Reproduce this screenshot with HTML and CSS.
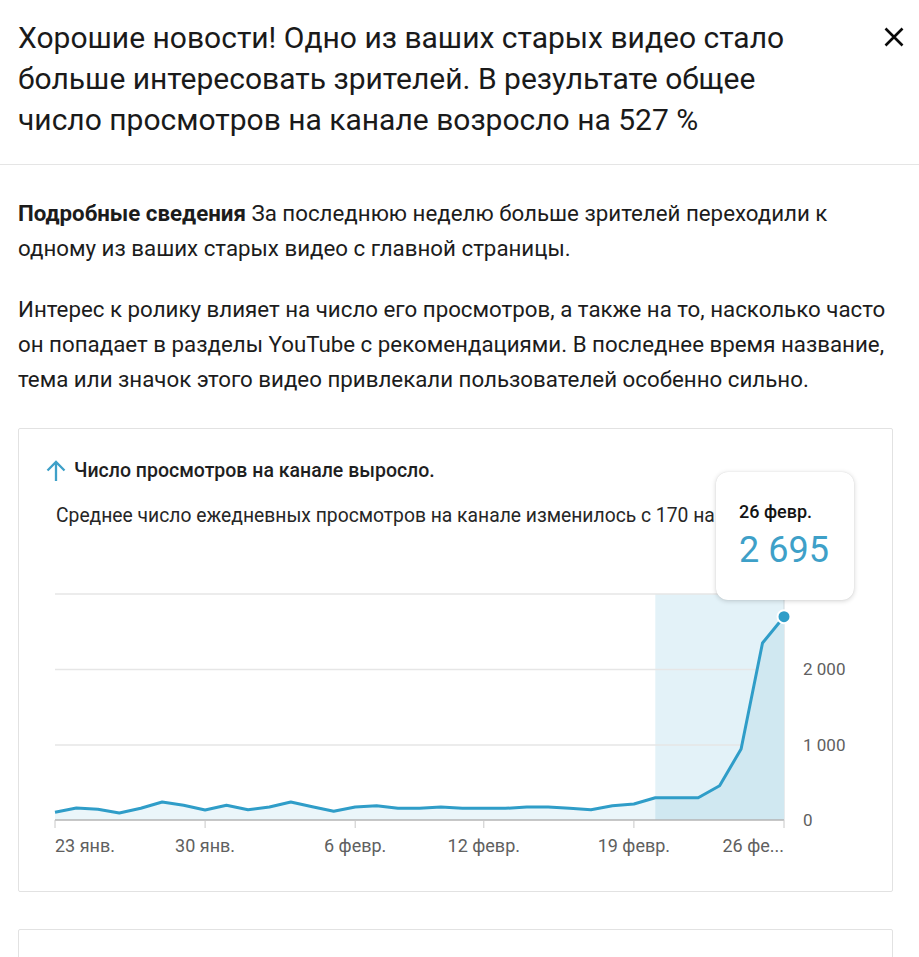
FILE: index.html
```html
<!DOCTYPE html>
<html lang="ru">
<head>
<meta charset="utf-8">
<title>Хорошие новости</title>
<link rel="stylesheet" href="styles.css">
</head>
<body>
<header class="head">
  <h1 class="title">Хорошие новости! Одно из ваших старых видео стало больше интересовать зрителей. В результате общее число просмотров на канале возросло на 527&nbsp;%</h1>
  <button class="close" aria-label="Закрыть">
    <svg width="24" height="24" viewBox="0 0 24 24"><path d="M3.5 3.5 L20.5 20.5 M20.5 3.5 L3.5 20.5" stroke="#0a0a0a" stroke-width="2.6" fill="none"/></svg>
  </button>
</header>
<main class="content">
  <p class="text"><b>Подробные сведения</b> За последнюю неделю больше зрителей переходили к одному из ваших старых видео с главной страницы.</p>
  <p class="text">Интерес к ролику влияет на число его просмотров, а также на то, насколько часто он попадает в разделы YouTube с рекомендациями. В последнее время название, тема или значок этого видео привлекали пользователей особенно сильно.</p>

  <section class="card">
    <div class="card-title">
      <svg class="arrow" width="20" height="22" viewBox="0 0 20 22"><path d="M10 21 V2 M1.5 10.5 L10 2 L18.5 10.5" stroke="#3ea0c8" stroke-width="2.3" fill="none"/></svg>
      <span>Число просмотров на канале выросло.</span>
    </div>
    <div class="card-sub">Среднее число ежедневных просмотров на канале изменилось с 170 на 385.</div>

    <svg class="chart" width="873" height="352" viewBox="19 540 873 352">
      <defs>
        <clipPath id="hl"><rect x="655.3" y="590" width="128.7" height="231"/></clipPath>
      </defs>
      <rect x="655.3" y="595" width="128.7" height="226" fill="#e3f2f8"/>
      <g stroke="#e6e6e6" stroke-width="1.5">
        <line x1="55" y1="595" x2="784" y2="595"/>
        <line x1="55" y1="670.5" x2="784" y2="670.5"/>
        <line x1="55" y1="746" x2="784" y2="746"/>
      </g>
      <line x1="784" y1="595" x2="784" y2="821" stroke="#cfd8dc" stroke-width="1"/>
      <polygon fill="#ebf6fa" points="55,821 55,813.3 76.4,809 97.9,810.3 119.3,814 140.8,809.3 162.2,803 183.6,806.3 205.1,811 226.5,806.3 248,810.7 269.4,808 290.8,803 312.3,807.7 333.7,812.3 355.2,808 376.6,806.7 398,809.3 419.5,809.3 440.9,808 462.4,809.3 483.8,809.3 505.2,809.3 526.7,808 548.1,808 569.6,809.3 591,810.7 612.4,806.7 633.9,805 655.3,798.7 676.8,798.7 698.2,798.7 719.6,786.7 741.1,750 762.5,644 784,617.7 784,821"/>
      <polygon clip-path="url(#hl)" fill="#d0e8f1" points="55,821 55,813.3 76.4,809 97.9,810.3 119.3,814 140.8,809.3 162.2,803 183.6,806.3 205.1,811 226.5,806.3 248,810.7 269.4,808 290.8,803 312.3,807.7 333.7,812.3 355.2,808 376.6,806.7 398,809.3 419.5,809.3 440.9,808 462.4,809.3 483.8,809.3 505.2,809.3 526.7,808 548.1,808 569.6,809.3 591,810.7 612.4,806.7 633.9,805 655.3,798.7 676.8,798.7 698.2,798.7 719.6,786.7 741.1,750 762.5,644 784,617.7 784,821"/>
      <line x1="55" y1="821" x2="784" y2="821" stroke="#b5b5b5" stroke-width="1.5"/>
      <g stroke="#c8c8c8" stroke-width="1">
        <line x1="55" y1="821" x2="55" y2="829"/>
        <line x1="205.1" y1="821" x2="205.1" y2="829"/>
        <line x1="355.2" y1="821" x2="355.2" y2="829"/>
        <line x1="483.8" y1="821" x2="483.8" y2="829"/>
        <line x1="633.9" y1="821" x2="633.9" y2="829"/>
        <line x1="784" y1="821" x2="784" y2="829"/>
      </g>
      <polyline fill="none" stroke="#2f9dc8" stroke-width="3" stroke-linejoin="round" points="55,813.3 76.4,809 97.9,810.3 119.3,814 140.8,809.3 162.2,803 183.6,806.3 205.1,811 226.5,806.3 248,810.7 269.4,808 290.8,803 312.3,807.7 333.7,812.3 355.2,808 376.6,806.7 398,809.3 419.5,809.3 440.9,808 462.4,809.3 483.8,809.3 505.2,809.3 526.7,808 548.1,808 569.6,809.3 591,810.7 612.4,806.7 633.9,805 655.3,798.7 676.8,798.7 698.2,798.7 719.6,786.7 741.1,750 762.5,644 784,617.7"/>
      <circle cx="784" cy="617.7" r="6.5" fill="#2f9dc8" stroke="#ffffff" stroke-width="2"/>
      <g class="axis">
        <text class="xl" x="55" y="853" text-anchor="start">23 янв.</text>
        <text class="xl" x="205.1" y="853" text-anchor="middle">30 янв.</text>
        <text class="xl" x="355.2" y="853" text-anchor="middle">6 февр.</text>
        <text class="xl" x="483.8" y="853" text-anchor="middle">12 февр.</text>
        <text class="xl" x="633.9" y="853" text-anchor="middle">19 февр.</text>
        <text class="xl" x="784" y="853" text-anchor="end">26 фе...</text>
        <text class="yl" x="803" y="676">2 000</text>
        <text class="yl" x="803" y="752">1 000</text>
        <text class="yl" x="803" y="827">0</text>
      </g>
    </svg>

    <div class="tooltip">
      <div class="tip-date">26 февр.</div>
      <div class="tip-value">2 695</div>
    </div>
  </section>

  <section class="card card-next"></section>
</main>
</body>
</html>
```

FILE: styles.css
```css
* { box-sizing: border-box; }

html, body {
  margin: 0;
  padding: 0;
  background: #ffffff;
  font-family: Roboto, "Noto Sans", "Liberation Sans", sans-serif;
  color: #212121;
}

body { overflow: hidden; }

.head {
  display: flex;
  align-items: flex-start;
  padding: 17px 12px 24px 18px;
  border-bottom: 1px solid #e5e5e5;
}

.title {
  flex: 1;
  margin: 0;
  padding-right: 40px;
  font-size: 30px;
  font-weight: 400;
  line-height: 41px;
  color: #1a1a1a;
}

.close {
  flex: none;
  width: 24px;
  height: 24px;
  margin-top: 8px;
  margin-right: 1px;
  padding: 0;
  border: 0;
  background: none;
  display: flex;
}

.content {
  padding: 31px 26px 0 18px;
}

.text {
  margin: 0 0 26px;
  font-size: 22.3px;
  line-height: 35px;
  color: #1c1c1c;
}

.text b { font-weight: 700; }

.card {
  position: relative;
  margin-top: 31px;
  border: 1px solid #e2e2e2;
  border-radius: 2px;
  height: 464px;
  padding-top: 30px;
}

.card-title {
  display: flex;
  align-items: center;
  gap: 8px;
  padding-left: 27px;
  font-size: 19.5px;
  font-weight: 500;
  line-height: 24px;
  color: #1f1f1f;
}

.arrow { flex: none; }

.card-sub {
  margin-top: 21px;
  padding-left: 37px;
  font-size: 19.3px;
  line-height: 24px;
  color: #262626;
  white-space: nowrap;
  overflow: hidden;
}

.chart {
  display: block;
  margin-top: 11px;
}

.axis text {
  font-family: Roboto, "Noto Sans", "Liberation Sans", sans-serif;
  fill: #606060;
}

.axis .xl { font-size: 18px; }
.axis .yl { font-size: 17px; }

.tooltip {
  position: absolute;
  left: 697px;
  top: 43px;
  width: 138px;
  height: 128px;
  padding: 28px 0 0 23px;
  background: #ffffff;
  border-radius: 12px;
  box-shadow: 0 1px 5px rgba(0, 0, 0, 0.18), 0 0 1px rgba(0, 0, 0, 0.12);
}

.tip-date {
  font-size: 18px;
  font-weight: 500;
  line-height: 24px;
  color: #141414;
}

.tip-value {
  margin-top: 5px;
  font-size: 36px;
  line-height: 42px;
  color: #3ea0c8;
}

.card-next {
  margin-top: 37px;
  height: 120px;
  padding: 0;
}
```
